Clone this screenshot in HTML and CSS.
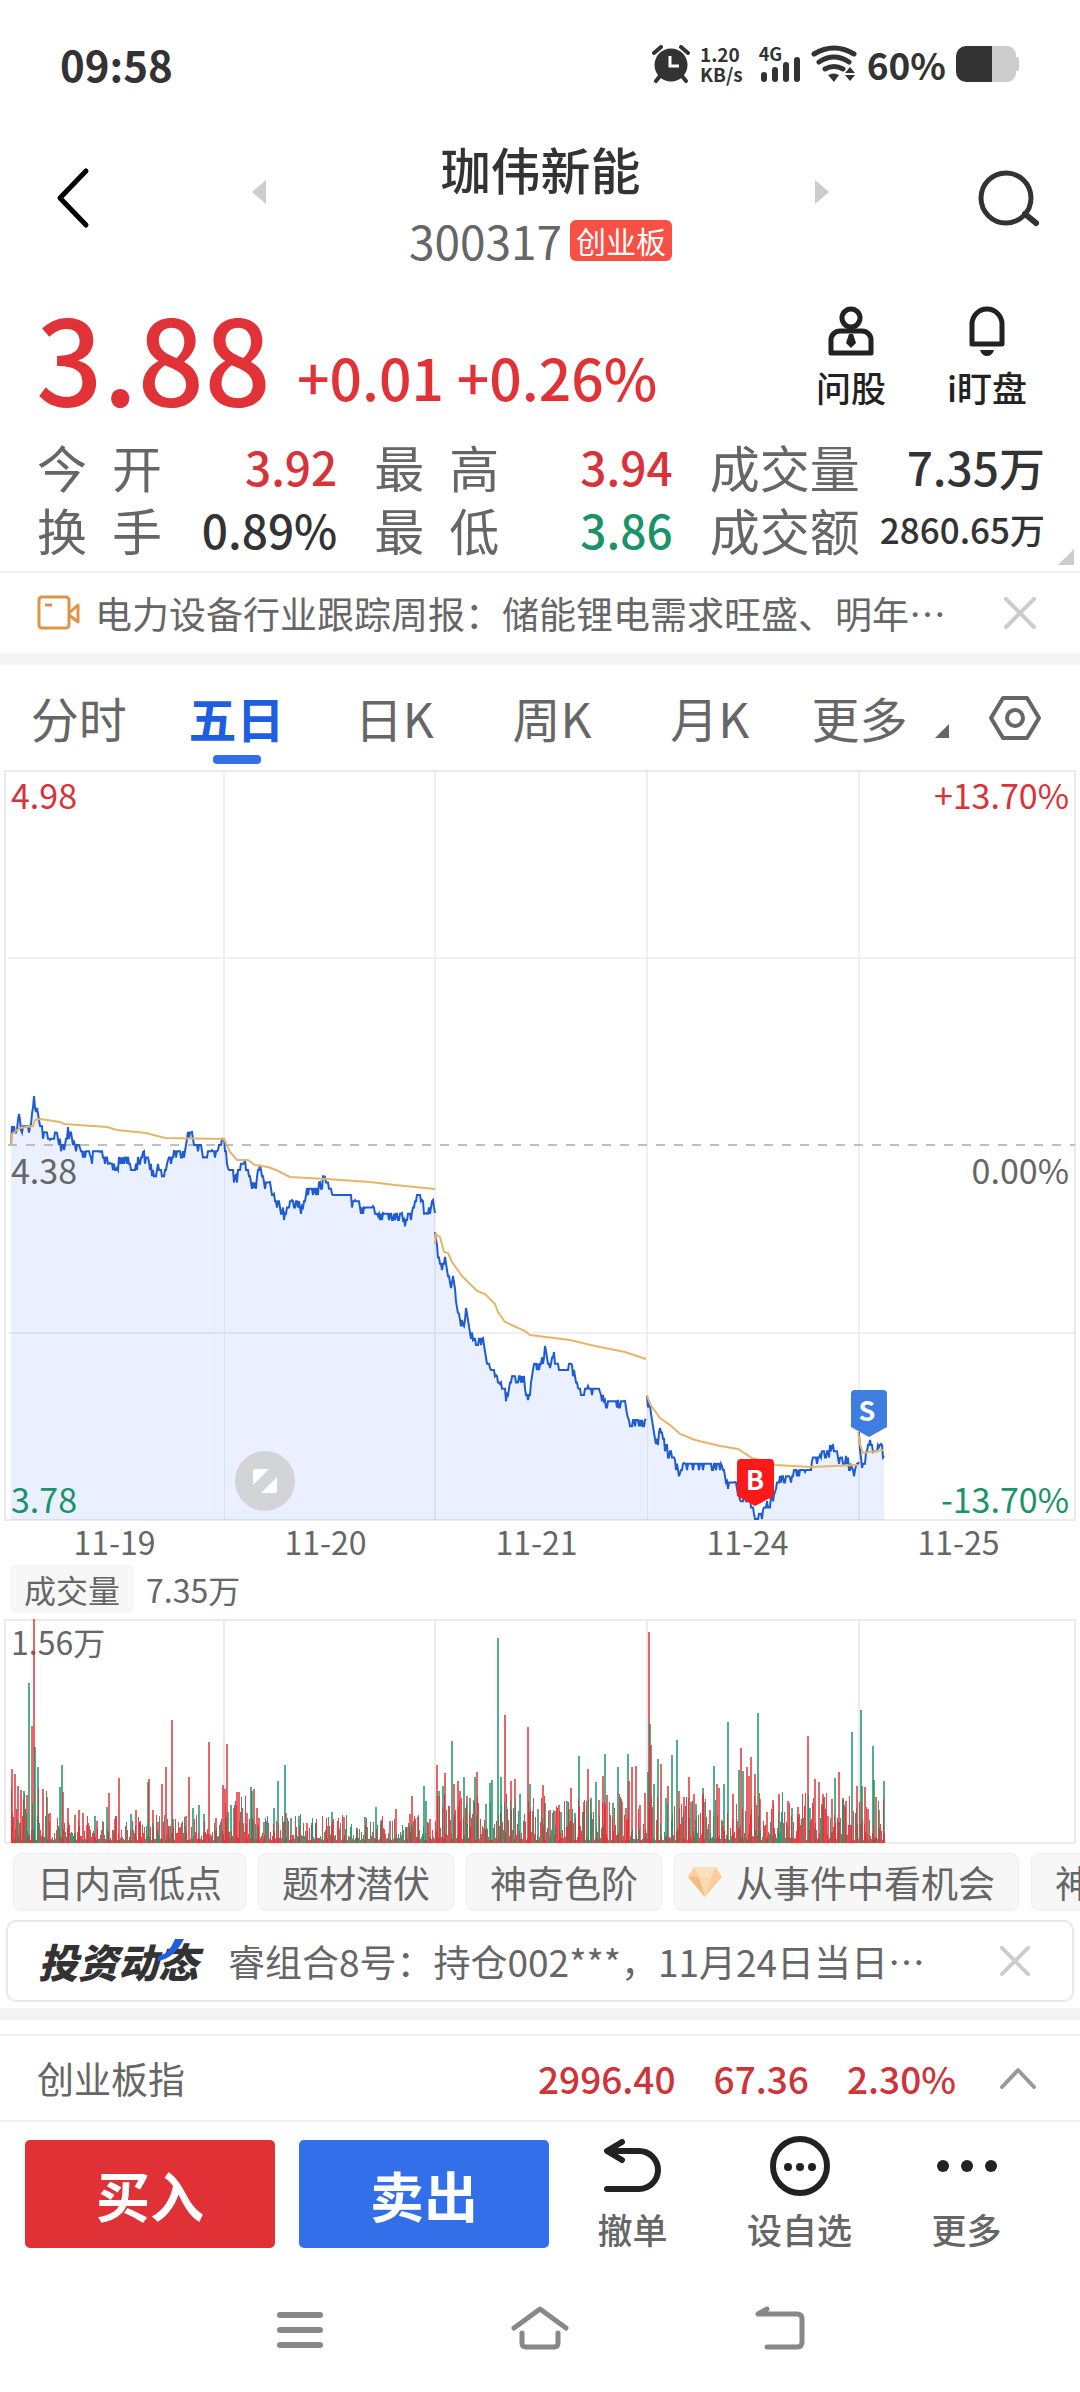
FILE: index.html
```
<!DOCTYPE html>
<html lang="zh-CN">
<head>
    <meta charset="UTF-8">
    <meta name="viewport" content="width=device-width, initial-scale=1.0">
    <title>珈伟新能 300317</title>
    <link rel="stylesheet" href="styles.css">
</head>
<body>
    <div class="status-bar">
        <span class="clock">09:58</span>
        <div class="status-icons">
            <svg width="38" height="38" viewBox="0 0 38 38">
                <circle cx="19" cy="20" r="16.500" fill="#333"/>
                <path d="M2 8l7-6M36 8l-7-6M8 31l-4 5M30 31l4 5" stroke="#333" stroke-width="4" stroke-linecap="round"/>
                <path d="M18 11v10h9" fill="none" stroke="#fff" stroke-width="3"/>
            </svg>
            <div class="net-speed"><span>1.20</span><span>KB/s</span></div>
            <span class="signal">
                <span class="net-type">4G</span>
                <svg width="42" height="38" viewBox="0 0 42 38">
                    <path d="M5 30v4M16 25v9M27 20v14M38 15v19" stroke="#333" stroke-width="6" stroke-linecap="round"/>
                </svg>
            </span>
            <svg width="46" height="38" viewBox="0 0 46 38">
                <path d="M3 9Q23-3 43 9M8 17Q23 7 38 17M14 24Q23 19 32 24" fill="none" stroke="#333" stroke-width="5" stroke-linecap="round"/>
                <path d="M17 30q6-3 11 0l-5 7zM34 28l5-6 5 6zM34 30h10l-5 6z" fill="#333"/>
            </svg>
            <span class="battery-text">60%</span>
            <svg width="64" height="36" viewBox="0 0 64 36">
                <path d="M36 0h15a9 9 0 0 1 9 9v2h1q2 0 2 3v8q0 3-2 3h-1v2a9 9 0 0 1-9 9H36z" fill="#ccc"/>
                <path d="M36 0H10A10 10 0 0 0 0 10v16a10 10 0 0 0 10 10h26z" fill="#333"/>
            </svg>
        </div>
    </div>

    <header class="header">
        <button class="icon-button" aria-label="返回">
            <svg width="34" height="62" viewBox="0 0 34 62"><path d="M30 4L4 31l26 27" fill="none" stroke="#000" stroke-width="5" stroke-linecap="round" stroke-linejoin="round"/></svg>
        </button>
        <div class="switcher">
            <button class="icon-button arrow" aria-label="上一只">
                <svg width="14" height="24" viewBox="0 0 14 24"><path d="M14 0v24L0 12z" fill="#ccc"/></svg>
            </button>
            <div class="stock">
                <h1>珈伟新能</h1>
                <div class="code">300317<span class="board">创业板</span></div>
            </div>
            <button class="icon-button arrow" aria-label="下一只">
                <svg width="14" height="24" viewBox="0 0 14 24"><path d="M0 0v24l14-12z" fill="#ccc"/></svg>
            </button>
        </div>
        <button class="icon-button" aria-label="搜索">
            <svg width="62" height="58" viewBox="0 0 62 58"><circle cx="28" cy="29" r="25" fill="none" stroke="#333" stroke-width="5"/><path d="M47 45l11 9" stroke="#333" stroke-width="6" stroke-linecap="round"/></svg>
        </button>
    </header>

    <section class="quote">
        <span class="price">3.88</span>
        <span class="change">+0.01 +0.26%</span>
        <div class="quote-actions">
            <button class="tool">
                <svg width="48" height="50" viewBox="0 0 48 50" fill="none" stroke="#222" stroke-width="5">
                    <circle cx="24" cy="12" r="9"/>
                    <path d="M4 47V34a9 9 0 0 1 9-9h22a9 9 0 0 1 9 9v13z" stroke-linejoin="round"/>
                    <path d="M22 28h4l3 9-5 5-5-5z" fill="#222" stroke="none"/>
                </svg>
                问股
            </button>
            <button class="tool">
                <svg width="40" height="50" viewBox="0 0 40 50">
                    <path d="M5 38V18a15 15 0 0 1 30 0v20z" fill="none" stroke="#222" stroke-width="5" stroke-linejoin="round"/>
                    <path d="M13 44h14q-2 6-7 6t-7-6z" fill="#222"/>
                </svg>
                i盯盘
            </button>
        </div>
    </section>

    <section class="stats">
        <div class="stat"><span>今&ensp;开</span><b class="up">3.92</b></div>
        <div class="stat"><span>最&ensp;高</span><b class="up">3.94</b></div>
        <div class="stat"><span>成交量</span><b>7.35万</b></div>
        <div class="stat"><span>换&ensp;手</span><b>0.89%</b></div>
        <div class="stat"><span>最&ensp;低</span><b class="down">3.86</b></div>
        <div class="stat"><span>成交额</span><b class="small">2860.65万</b></div>
        <svg class="corner" width="16" height="16" viewBox="0 0 16 16"><path d="M16 0v16H0z" fill="#ccc"/></svg>
    </section>

    <div class="news">
        <svg width="44" height="36" viewBox="0 0 44 36" fill="none" stroke="#e0924a" stroke-width="3">
            <rect x="2" y="2" width="30" height="31" rx="3"/>
            <path d="M32 18l9-8v17l-9-7M8 10h7" stroke-linejoin="round"/>
        </svg>
        <a href="#">电力设备行业跟踪周报：储能锂电需求旺盛、明年…</a>
        <button class="close" aria-label="关闭">
            <svg width="32" height="32" viewBox="0 0 32 32"><path d="M2 2l28 28M30 2L2 30" stroke="#ccc" stroke-width="4" stroke-linecap="round"/></svg>
        </button>
    </div>

    <div class="divider"></div>

    <nav class="tabs">
        <button>分时</button>
        <button class="active">五日</button>
        <button>日K</button>
        <button>周K</button>
        <button>月K</button>
        <button class="more">更多<svg width="14" height="14" viewBox="0 0 13 13"><path d="M13 0v13H0z" fill="#666"/></svg></button>
        <button class="setting" aria-label="设置">
            <svg width="52" height="46" viewBox="0 0 52 46" fill="none" stroke="#666" stroke-width="4">
                <path d="M14 3h24l12 20-12 20H14L2 23z" stroke-linejoin="round"/>
                <circle cx="26" cy="23" r="8"/>
            </svg>
        </button>
    </nav>

    <section class="chart">
        <svg class="plot" id="priceChart" viewBox="0 0 1080 751">
            <g id="priceLayer"></g>
            <g fill="none" stroke="#000" stroke-opacity="0.08" stroke-width="2">
                <path d="M5 1H1075V750H5z"/>
                <path d="M224 1V750M435 1V750M647 1V750M859 1V750M8 188H1075M8 563H1075" stroke-width="1.500"/>
            </g>
            <path d="M8 375H1075" stroke="#aaa" stroke-width="1.500" stroke-dasharray="9 9"/>
            <g id="lineLayer"></g>
            <g class="marker">
                <path d="M741 689h29a4 4 0 0 1 4 4v33l-19 10-18-10v-33a4 4 0 0 1 4-4z" fill="#fa1919"/>
                <text x="755" y="720">B</text>
                <path d="M855 620h28a4 4 0 0 1 4 4v33l-18 10-18-10v-33a4 4 0 0 1 4-4z" fill="#3f7de0"/>
                <text x="867" y="651">S</text>
            </g>
        </svg>
        <span class="label top left up">4.98</span>
        <span class="label top right up">+13.70%</span>
        <span class="label middle left">4.38</span>
        <span class="label middle right">0.00%</span>
        <span class="label bottom left down">3.78</span>
        <span class="label bottom right down">-13.70%</span>
        <button class="zoom" aria-label="全屏">
            <svg width="24" height="24" viewBox="0 0 24 24" fill="#fff"><path d="M2 0h14L0 16V2a2 2 0 0 1 2-2zM24 8v14a2 2 0 0 1-2 2H8z"/></svg>
        </button>
    </section>
    <div class="dates">
        <span>11-19</span><span>11-20</span><span>11-21</span><span>11-24</span><span>11-25</span>
    </div>

    <div class="volume-head"><button>成交量</button><span>7.35万</span></div>
    <section class="chart">
        <span class="label top left volume-max">1.56万</span>
        <svg class="plot" viewBox="0 0 1080 225">
            <path d="M5 1H1075V224H5zM224 1V224M435 1V224M647 1V224M859 1V224" fill="none" stroke="#000" stroke-opacity="0.08" stroke-width="2"/>
            <g id="volumeLayer"></g>
        </svg>
    </section>

    <div class="chips">
        <button>日内高低点</button>
        <button>题材潜伏</button>
        <button>神奇色阶</button>
        <button class="gem">
            <svg width="34" height="30" viewBox="0 0 34 30"><path d="M6 0h22l6 10-17 20L0 10z" fill="#f8cf9c"/><path d="M6 0h22l-5 10H11z" fill="#fbe0bd"/><path d="M0 10h11l6 20z" fill="#f3bd80"/><path d="M11 10h12l-6 20z" fill="#fad9af"/></svg>
            从事件中看机会
        </button>
        <button>神奇电波</button>
    </div>

    <div class="card">
        <span class="card-logo">投资动态<svg width="30" height="24" viewBox="0 0 30 24"><path d="M19 0h9Q18 20 1 22l2-5Q13 15 19 0z" fill="#1d5fe0"/></svg></span>
        <a href="#">睿组合8号：持仓002***，11月24日当日…</a>
        <button class="close" aria-label="关闭">
            <svg width="30" height="30" viewBox="0 0 32 32"><path d="M2 2l28 28M30 2L2 30" stroke="#ccc" stroke-width="4" stroke-linecap="round"/></svg>
        </button>
    </div>

    <div class="divider"></div>

    <div class="index-row">
        <span class="index-name">创业板指</span>
        <span>2996.40</span>
        <span>67.36</span>
        <span>2.30%</span>
        <button class="close" aria-label="展开">
            <svg width="36" height="22" viewBox="0 0 36 22"><path d="M2 20L18 3l16 17" fill="none" stroke="#999" stroke-width="4" stroke-linecap="round" stroke-linejoin="round"/></svg>
        </button>
    </div>

    <div class="trade-bar">
        <button class="trade buy">买入</button>
        <button class="trade sell">卖出</button>
        <button class="tool">
            <svg width="60" height="60" viewBox="0 0 60 60"><path d="M19 6L4 15l15 9M6 15h30a19 19 0 0 1 0 38H4" fill="none" stroke="#222" stroke-width="6" stroke-linecap="round" stroke-linejoin="round"/></svg>
            撤单
        </button>
        <button class="tool">
            <svg width="60" height="60" viewBox="0 0 60 60" fill="#222"><circle cx="30" cy="30" r="27" fill="none" stroke="#222" stroke-width="6"/><circle cx="18" cy="31" r="4"/><circle cx="30" cy="31" r="4"/><circle cx="42" cy="31" r="4"/></svg>
            设自选
        </button>
        <button class="tool">
            <svg width="60" height="60" viewBox="0 0 60 60" fill="#222"><circle cx="6" cy="30" r="6"/><circle cx="30" cy="30" r="6"/><circle cx="54" cy="30" r="6"/></svg>
            更多
        </button>
    </div>

    <nav class="system-nav">
        <button aria-label="最近任务">
            <svg width="46" height="46" viewBox="0 0 46 46"><path d="M3 11h40M3 26h40M3 41h40" stroke="#888" stroke-width="6" stroke-linecap="round"/></svg>
        </button>
        <button aria-label="主页">
            <svg width="60" height="46" viewBox="0 0 60 46" fill="none" stroke="#888" stroke-width="5" stroke-linecap="round" stroke-linejoin="round"><path d="M4 24L30 5l26 19M12 29v10q0 4 4 4h28q4 0 4-4V29"/></svg>
        </button>
        <button aria-label="返回">
            <svg width="50" height="46" viewBox="0 0 50 46" fill="none" stroke="#888" stroke-width="5" stroke-linecap="round" stroke-linejoin="round"><path d="M12 5L3 10h39q5 0 5 5v23q0 5-5 5H12"/></svg>
        </button>
    </nav>

    <script src="script.js"></script>
</body>
</html>
```
FILE: styles.css
```
* {
    box-sizing: border-box;
}
body {
    margin: 0;
    background-color: #fff;
    color: #333;
    font-family: "Noto Sans CJK SC", sans-serif;
    overflow-x: hidden;
}
button {
    padding: 0;
    border: none;
    background: none;
    color: inherit;
    font-family: inherit;
    cursor: pointer;
}
a {
    color: inherit;
    text-decoration: none;
}
svg {
    display: block;
    flex-shrink: 0;
}
.up {
    color: #d9333a;
}
.down {
    color: #1a9368;
}

/* status bar */
.status-bar {
    display: flex;
    justify-content: space-between;
    align-items: center;
    height: 128px;
    padding: 0 60px;
}
.clock {
    font-size: 42px;
    line-height: 54px;
    font-weight: bold;
}
.status-icons {
    display: flex;
    align-items: center;
    gap: 10px;
}
.net-speed {
    display: flex;
    flex-direction: column;
    font-size: 19px;
    line-height: 20px;
    font-weight: bold;
}
.signal {
    position: relative;
    margin-left: 6px;
}
.net-type {
    position: absolute;
    top: 0;
    left: 0;
    font-size: 18px;
    line-height: 16px;
    font-weight: bold;
}
.battery-text {
    font-size: 37px;
    line-height: 38px;
    font-weight: bold;
}

/* header */
.header {
    display: flex;
    align-items: flex-start;
    height: 150px;
    padding: 0 40px 0 56px;
}
.icon-button {
    display: flex;
    align-items: center;
    height: 140px;
}
.arrow {
    height: 128px;
}
.switcher {
    flex: 1;
    display: flex;
    justify-content: space-between;
    margin: 0 149px 0 162px;
}
.stock {
    text-align: center;
}
.stock h1 {
    margin: 0;
    font-size: 50px;
    line-height: 80px;
    font-weight: 500;
}
.code {
    display: flex;
    align-items: center;
    gap: 8px;
    font-size: 46px;
    line-height: 64px;
    color: #666;
}
.board {
    padding: 0 6px;
    border-radius: 6px;
    background-color: #f85045;
    color: #fff;
    font-size: 30px;
    line-height: 41px;
}

/* quote */
.quote {
    display: flex;
    align-items: flex-start;
    height: 156px;
    padding: 18px 53px 0 36px;
    color: #e03237;
}
.price {
    font-size: 117px;
    line-height: 118px;
    font-weight: 500;
}
.change {
    margin-top: 40px;
    margin-left: 26px;
    font-size: 57px;
    line-height: 80px;
    font-weight: 500;
}
.quote-actions {
    display: flex;
    gap: 61px;
    margin-top: 10px;
    margin-left: auto;
}
.tool {
    display: flex;
    flex-direction: column;
    align-items: center;
    gap: 8px;
    color: #222;
    font-size: 35px;
    line-height: 46px;
    font-weight: 500;
}
.stats {
    position: relative;
    display: grid;
    grid-template-columns: 300fr 298fr 335fr;
    column-gap: 37px;
    align-content: start;
    height: 137px;
    padding: 0 35px 0 37px;
}
.stat {
    display: flex;
    justify-content: space-between;
    align-items: center;
    height: 63px;
    font-size: 50px;
    line-height: 60px;
    color: #666;
}
.stat b {
    font-size: 46px;
    font-weight: 500;
    color: #333;
}
.stat b.up {
    color: #d9333a;
}
.stat b.down {
    color: #1a9368;
}
.stat b.small {
    font-size: 35px;
}
.corner {
    position: absolute;
    right: 6px;
    bottom: 6px;
}

/* news line */
.news {
    display: flex;
    align-items: center;
    height: 82px;
    padding: 0 44px 0 37px;
    border-top: 2px solid #f0f0f0;
    font-size: 37px;
    line-height: 48px;
    color: #666;
}
.news a {
    margin-left: 14px;
    white-space: nowrap;
}
.close {
    margin-left: auto;
}
.divider {
    height: 12px;
    background-color: #f4f4f4;
}

/* period tabs */
.tabs {
    display: flex;
    height: 105px;
    color: #666;
}
.tabs button {
    position: relative;
    flex: 157;
    font-size: 48px;
    line-height: 105px;
}
.tabs .active {
    color: #1d5fe0;
    font-weight: bold;
}
.tabs .active::after {
    content: "";
    position: absolute;
    left: 50%;
    bottom: 6px;
    width: 48px;
    height: 9px;
    margin-left: -24px;
    border-radius: 4px;
    background-color: #326fe8;
}
.tabs .more {
    flex: 160;
    display: flex;
    justify-content: flex-end;
    align-items: baseline;
    gap: 28px;
}
.tabs .setting {
    flex: 130;
    display: flex;
    justify-content: center;
    align-items: center;
}

/* charts */
.chart {
    position: relative;
}
.plot {
    position: relative;
    width: 100%;
    height: auto;
}
.label {
    position: absolute;
    font-size: 34px;
    line-height: 44px;
}
.label.left {
    left: 11px;
}
.label.right {
    right: 11px;
}
.label.top {
    top: 3px;
}
.label.middle {
    top: 50%;
    margin-top: 2px;
    color: #666;
}
.label.bottom {
    bottom: 0;
}
.label.volume-max {
    top: 0;
    font-size: 32px;
    color: #666;
}
.marker text {
    fill: #fff;
    font-size: 27px;
    font-weight: bold;
    text-anchor: middle;
}
.zoom {
    position: absolute;
    left: calc(22% - 3px);
    bottom: 10px;
    display: flex;
    justify-content: center;
    align-items: center;
    width: 60px;
    height: 60px;
    border-radius: 50%;
    background-color: rgba(200, 200, 200, 0.7);
}
.dates {
    display: flex;
    margin-bottom: 4px;
    padding: 0 16px 0 9px;
    font-size: 32px;
    line-height: 40px;
    color: #666;
}
.dates span {
    flex: 1;
    text-align: center;
}
.volume-head {
    display: flex;
    align-items: center;
    gap: 12px;
    margin-bottom: 6px;
    padding-left: 10px;
    font-size: 32px;
    line-height: 48px;
    color: #666;
}
.volume-head button {
    padding: 0 14px;
    border-radius: 4px;
    background-color: #f7f7f7;
    font-size: 32px;
    line-height: 48px;
}

/* chips */
.chips {
    display: flex;
    gap: 12px;
    padding: 9px 0 9px 13px;
    overflow: hidden;
}
.chips button {
    flex-shrink: 0;
    display: flex;
    align-items: center;
    gap: 14px;
    height: 58px;
    padding: 0 23px;
    border: 1px solid #eee;
    border-radius: 8px;
    background-color: #f7f7f7;
    color: #666;
    font-size: 37px;
    line-height: 56px;
}
.chips .gem {
    padding-left: 13px;
}

.card {
    display: flex;
    align-items: center;
    height: 82px;
    margin: 0 6px 6px;
    padding: 0 42px 0 30px;
    border: 2px solid #e8e8e8;
    border-radius: 10px;
    font-size: 37px;
    line-height: 48px;
    color: #666;
}
.card-logo {
    position: relative;
    color: #333;
    font-size: 40px;
    font-style: italic;
    font-weight: 900;
}
.card-logo svg {
    position: absolute;
    top: 2px;
    right: 12px;
}
.card a {
    margin-left: 30px;
    white-space: nowrap;
}

/* index row */
.index-row {
    display: flex;
    align-items: center;
    gap: 38px;
    height: 88px;
    margin-top: 14px;
    padding: 0 44px 0 37px;
    border-top: 2px solid #f0f0f0;
    border-bottom: 2px solid #f0f0f0;
    color: #cc353a;
    font-size: 37px;
    line-height: 48px;
    font-weight: 500;
}
.index-name {
    margin-right: auto;
    font-weight: normal;
    color: #666;
}
.index-row .close {
    margin-left: 6px;
}

/* bottom */
.trade-bar {
    display: flex;
    padding: 18px 30px 0 25px;
}
.trade {
    flex: 250;
    height: 108px;
    margin-right: 24px;
    border-radius: 5px;
    color: #fff;
    font-size: 54px;
    font-weight: bold;
}
.buy {
    background-color: #e03137;
}
.sell {
    margin-right: 0;
    background-color: #326fe8;
}
.trade-bar .tool {
    flex: 167;
    gap: 10px;
    color: #666;
}
.trade-bar .tool svg {
    margin-top: -4px;
}
.system-nav {
    display: flex;
    justify-content: center;
    height: 144px;
}
.system-nav button {
    display: flex;
    justify-content: center;
    align-items: center;
    width: 240px;
    height: 150px;
}
```
FILE: script.js
```
const SVG_NS = 'http://www.w3.org/2000/svg';
const TICK = 6.25;
const GREEN = '#1a9368';
const RED = '#e03237';

// five sessions, [x, y] on a 1080 x 751 plot
const price = [
    [[11, 375], [12, 356], [17, 360], [19, 344], [21, 360], [31, 354], [34, 326], [36, 342], [37, 338], [40, 356], [45, 362], [50, 370], [57, 363], [64, 380], [68, 357], [74, 372], [80, 378], [90, 385], [100, 382], [110, 393], [117, 398], [119, 387], [128, 387], [131, 400], [135, 400], [138, 387], [143, 382], [149, 392], [155, 406], [158, 394], [163, 406], [168, 390], [174, 381], [185, 381], [188, 362], [192, 362], [194, 375], [200, 375], [205, 387], [212, 380], [218, 380], [223, 368]],
    [[224, 368], [228, 398], [236, 405], [245, 390], [254, 418], [260, 395], [264, 412], [270, 412], [274, 424], [285, 443], [292, 430], [302, 436], [307, 418], [317, 418], [320, 412], [325, 407], [332, 424], [345, 425], [355, 430], [365, 438], [373, 436], [378, 446], [383, 443], [402, 443], [404, 449], [412, 442], [418, 425], [422, 430], [426, 443], [433, 430], [435, 443]],
    [[435, 462], [437, 475], [442, 500], [445, 487], [451, 518], [453, 506], [458, 543], [463, 555], [466, 538], [473, 570], [483, 568], [490, 598], [496, 605], [500, 614], [507, 624], [513, 606], [524, 606], [528, 630], [534, 594], [541, 594], [545, 576], [550, 598], [554, 582], [560, 600], [572, 595], [578, 618], [588, 616], [600, 622], [605, 630], [618, 630], [625, 631], [628, 648], [646, 649]],
    [[647, 626], [650, 635], [656, 674], [660, 658], [666, 675], [675, 690], [680, 703], [684, 693], [722, 696], [727, 711], [735, 712], [740, 730], [750, 725], [757, 749], [763, 740], [775, 722], [780, 706], [790, 708], [795, 700], [805, 702], [812, 691], [820, 685], [832, 676], [840, 688], [846, 686], [852, 698], [856, 696], [859, 692]],
    [[859, 662], [860, 680], [862, 698], [866, 682], [870, 670], [873, 682], [879, 677], [881, 674], [884, 686]]
];
const average = [
    [[11, 375], [12, 364], [20, 358], [33, 356], [35, 350], [40, 349], [60, 352], [64, 354], [107, 357], [117, 360], [146, 363], [165, 368], [224, 369], [230, 382], [237, 390], [248, 390], [255, 395], [268, 397], [276, 400], [290, 407], [326, 409], [370, 412], [395, 415], [435, 419]],
    [[435, 474], [436, 464], [440, 467], [444, 482], [448, 483], [452, 492], [462, 506], [477, 521], [485, 524], [495, 534], [498, 542], [505, 552], [525, 561], [530, 565], [570, 570], [595, 576], [625, 582], [646, 589]],
    [[647, 625], [650, 634], [660, 648], [670, 655], [680, 664], [695, 670], [720, 676], [738, 679], [752, 688], [775, 695], [810, 697], [858, 695]],
    [[858, 662], [860, 674], [863, 683], [884, 680]]
];
// [x, height], negative height is a falling minute
const volume = [
    [12, 74], [15, 69], [18, 57], [21, 53], [24, -52], [27, 48], [29, -160], [32, 117], [34, 224], [35, -96], [38, -76], [43, 54], [47, 46], [50, 30], [60, -56], [62, -78], [63, 51], [68, 35], [75, 28], [79, 33], [83, 30], [87, 18], [95, -27], [97, 22], [107, -36], [109, 50], [115, 24], [119, 65], [131, -29], [136, 33], [140, 20], [148, -61], [149, 64], [153, 33], [158, 21], [162, 59], [166, 76], [169, 17], [172, 123], [173, -24], [186, 27], [189, 66], [193, -35], [199, -38], [204, -29], [209, 101], [216, 25], [223, 58], [225, 54],
    [227, 99], [228, -31], [231, -38], [234, -35], [237, 51], [239, 51], [247, 30], [251, -56], [252, -52], [254, 54], [257, 35], [259, 25], [264, -21], [274, -35], [278, -62], [285, -78], [286, 30], [291, -25], [299, -27], [307, 20], [312, -20], [316, 20], [327, 17], [332, -31], [344, 26], [357, -15], [365, -26], [376, -36], [381, -22], [390, 22], [396, 34], [407, 16], [410, 29], [412, 47], [418, 26], [424, -57], [426, -42], [430, 24],
    [437, 78], [439, -52], [443, -57], [445, 70], [452, -102], [454, 59], [458, 62], [460, 52], [464, -66], [467, 47], [470, -45], [475, -66], [477, 71], [486, -39], [490, -60], [492, -63], [498, -205], [501, -66], [505, 128], [511, 62], [515, 64], [520, -49], [528, 116], [530, -59], [538, -34], [543, 58], [545, -40], [550, 33], [555, 32], [559, 38], [561, -31], [567, -42], [569, -34], [571, 55], [575, -30], [579, -87], [584, 41], [588, 74], [591, 45], [596, -61], [599, 43], [603, 67], [605, -89], [607, 48], [613, -40], [618, -76], [622, 41], [626, 35], [628, -89], [629, 62], [632, 76], [636, 77], [640, 38], [645, 50],
    [648, -71], [649, 211], [650, -119], [651, 98], [654, -59], [658, -84], [661, 79], [666, -45], [668, 57], [672, -88], [677, -103], [679, 52], [684, 46], [689, 66], [691, -41], [694, 49], [696, -39], [703, -55], [704, 41], [710, 33], [714, -77], [717, 59], [719, 55], [724, -59], [728, -121], [733, 49], [739, -73], [741, 95], [743, -72], [747, 76], [749, 67], [751, 86], [755, 69], [758, -130], [760, 44], [767, 31], [773, 43], [779, 49], [788, 42], [792, -35], [798, 36], [808, 107], [810, -35], [815, 64], [819, 61], [823, 49], [828, 27], [832, 44], [835, -65], [839, 71], [843, 45], [846, 42], [852, -111], [857, 57],
    [861, -133], [862, -57], [865, 56], [868, 34], [873, -97], [874, -63], [876, 46], [879, 33], [884, -62]
];

// fixed seed, every load draws the same chart
let seed = 7;
function random() {
    seed = (seed * 16807) % 2147483647;
    return seed / 2147483647;
}

function draw(layer, tag, attrs) {
    const node = document.createElementNS(SVG_NS, tag);
    for (const key in attrs) node.setAttribute(key, attrs[key]);
    document.getElementById(layer).appendChild(node);
}

function toPath(points) {
    return 'M' + points.map(p => p.join(' ')).join('L');
}

// Fills in the minutes between two turning points, snapped to one price tick
function fillMinutes(points) {
    const result = [];
    for (let i = 0; i < points.length - 1; i++) {
        const [x1, y1] = points[i];
        const [x2, y2] = points[i + 1];
        result.push([x1, y1]);
        for (let x = x1 + 1; x < x2; x += 1) {
            const y = y1 + (y2 - y1) * (x - x1) / (x2 - x1);
            const jitter = random() < 0.3 ? TICK : 0;
            const snapped = Math.round((y + jitter) / TICK) * TICK;
            result.push([x, Math.min(snapped, 749)]);
        }
    }
    result.push(points[points.length - 1]);
    return result;
}

price.forEach(day => {
    const points = fillMinutes(day);
    const last = points[points.length - 1][0];
    draw('priceLayer', 'path', { d: toPath(points) + `L${last} 750L${points[0][0]} 750Z`, fill: '#eaf0ff' });
    draw('lineLayer', 'path', { d: toPath(points), fill: 'none', stroke: '#1f5cd0', 'stroke-width': 2 });
});
average.forEach(day => {
    draw('lineLayer', 'path', { d: toPath(day), fill: 'none', stroke: '#e6b566', 'stroke-width': 2 });
});

function drawBar(x, height, color, width, opacity) {
    draw('volumeLayer', 'rect', { x: x, y: 224 - height, width: width, height: height, fill: color, opacity: opacity });
}

volume.forEach(([x, height]) => {
    drawBar(x - 1, Math.abs(height), height < 0 ? GREEN : RED, 2, 0.75);
});
for (let x = 11; x < 885; x++) {
    let busy = 26;
    if (x < 50) busy = 55;
    else if (x > 224 && x < 260) busy = 45;
    else if (x > 435) busy = 48;
    const height = 3 + Math.round(Math.pow(random(), 2) * busy);
    drawBar(x, height, random() < 0.3 ? GREEN : RED, 1, 0.9);
}
```
